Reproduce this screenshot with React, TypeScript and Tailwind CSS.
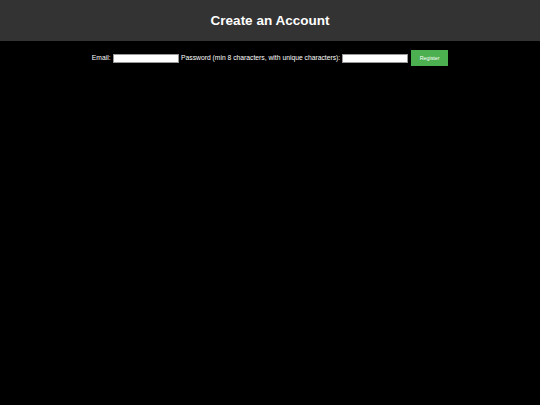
import React from "react";

export default function App() {
  return (
    <div
      className="min-h-[405px] w-full bg-black"
      style={{ fontFamily: '"Liberation Sans", Arial, sans-serif' }}
    >
      <header className="flex h-[41px] items-center justify-center bg-[#333333]">
        <h1 className="text-[13.5px] font-bold leading-[15px] text-white">Create an Account</h1>
      </header>
      <form
        className="flex items-center justify-center pt-[9px] text-[6.75px] leading-[8px] text-white"
        onSubmit={(e) => e.preventDefault()}
      >
        <label className="mr-[2px]">Email:</label>
        <input
          type="email"
          className="h-[9px] w-[66px] border-[0.5px] border-[#999] bg-white outline-none"
        />
        <label className="ml-[2.5px] mr-[2px]">Password (min 8 characters, with unique characters):</label>
        <input
          type="password"
          className="h-[9px] w-[66px] border-[0.5px] border-[#999] bg-white outline-none"
        />
        <button
          type="submit"
          className="ml-[3px] h-[16px] w-[37px] bg-[#4caf50] text-[5.3px] leading-[6px] text-white"
        >
          Register
        </button>
      </form>
    </div>
  );
}
